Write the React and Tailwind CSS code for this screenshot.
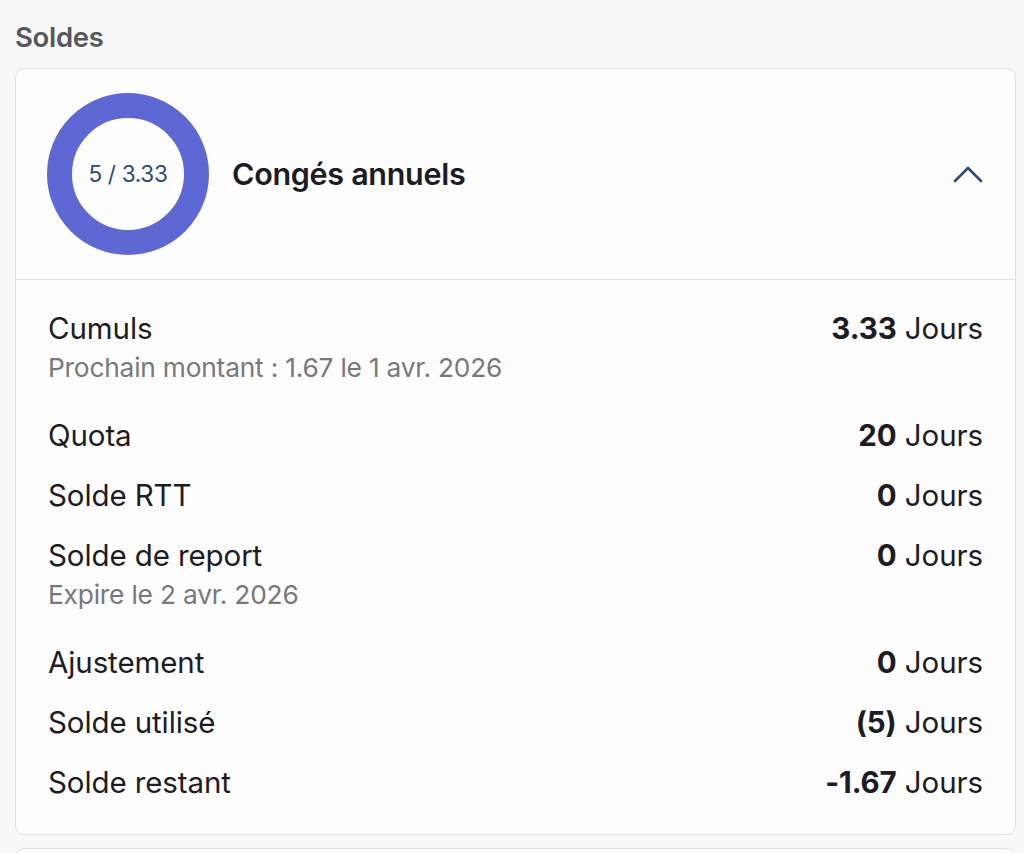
import React from 'react';

const rows = [
  { label: 'Cumuls', value: '3.33', sub: 'Prochain montant : 1.67 le 1 avr. 2026' },
  { label: 'Quota', value: '20' },
  { label: 'Solde RTT', value: '0' },
  { label: 'Solde de report', value: '0', sub: 'Expire le 2 avr. 2026' },
  { label: 'Ajustement', value: '0' },
  { label: 'Solde utilisé', value: '(5)' },
  { label: 'Solde restant', value: '-1.67' },
];

const App = () => {
  return (
    <div className="h-[853px] overflow-hidden bg-[#f8f8f9] pl-[15px] pr-[8px] pt-[20px]" style={{ fontFamily: 'Inter, Lato, sans-serif' }}>
      <h2 className="text-[27.5px] leading-[34px] font-semibold text-[#55595d] mb-[14px] tracking-[-0.3px]">Soldes</h2>

      <div className="bg-[#fdfdfd] border border-[#e1e1e7] rounded-[9px]">
        {/* en-tête */}
        <div className="flex items-center px-[31px] py-[24px] border-b border-[#e1e1e7]">
          <div className="w-[162px] h-[162px] rounded-full border-[25px] border-[#5d68d4] flex items-center justify-center shrink-0">
            <span className="text-[22.5px] text-[#2f4a78] tracking-[-0.3px]">5 / 3.33</span>
          </div>
          <div className="ml-[23px] text-[30.5px] font-semibold text-[#1c1c24] flex-1 tracking-[-0.3px]">Congés annuels</div>
          <svg width="30" height="18" viewBox="0 0 30 18" className="mr-[1px]">
            <polyline points="2,16 15,3 28,16" fill="none" stroke="#2c4a7a" strokeWidth="2.6" strokeLinecap="round" strokeLinejoin="round" />
          </svg>
        </div>

        {/* lignes */}
        <div className="px-[32px] pt-[30px] pb-[34px] flex flex-col gap-[24px]">
          {rows.map((r) => (
            <div key={r.label}>
              <div className="flex justify-between items-center text-[29.5px] leading-[36px] text-[#1c1c24] tracking-[-0.1px]">
                <span>{r.label}</span>
                <span>
                  <span className="font-bold">{r.value}</span> Jours
                </span>
              </div>
              {r.sub && (
                <div className="mt-[6px] mb-[9px] text-[26.3px] leading-[32px] text-[#78787c] tracking-[-0.2px]">{r.sub}</div>
              )}
            </div>
          ))}
        </div>
      </div>

      <div className="mt-[13px] h-[40px] bg-[#fdfdfd] border border-[#e1e1e7] rounded-[9px]" />
    </div>
  );
};

export default App;
